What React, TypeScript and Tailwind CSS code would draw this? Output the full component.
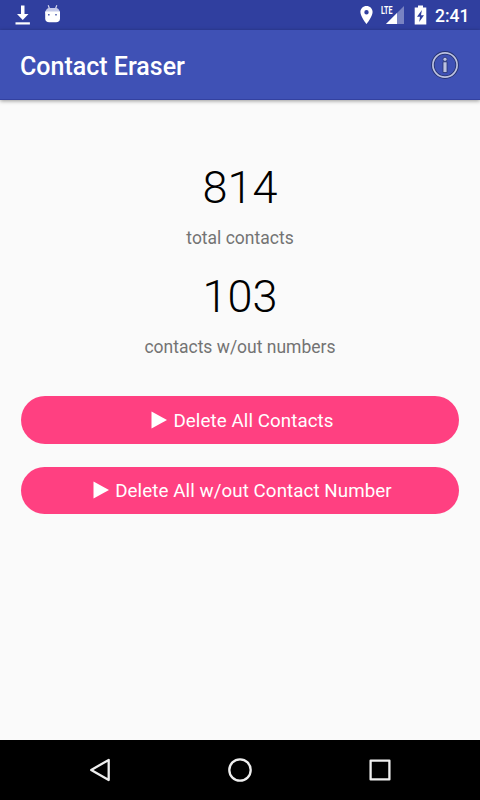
import type { ReactNode } from "react";

const stats = [
  { value: "814", label: "total contacts" },
  { value: "103", label: "contacts w/out numbers" },
];

const actions = ["Delete All Contacts", "Delete All w/out Contact Number"];

function StatusBar() {
  return (
    <div className="flex h-[30px] items-center justify-between bg-[#303f9f] pr-[10.5px] pl-[15px] text-white">
      <div className="flex items-center">
        {/* Download */}
        <svg width="15" height="30" viewBox="0 0 15 30" fill="currentColor">
          <path d="M6 5.5h3.5v8.5h4L7.75 20 2 14h4z" />
          <path d="M.5 22.3h14.4v2.2H.5z" />
        </svg>
        {/* Android head */}
        <svg width="16" height="30" viewBox="0 0 16 30" className="ml-[15px]">
          <path d="M3.2 5.2 4.6 9M11.8 5.2 10.4 9" stroke="#d5d8ec" strokeWidth="1.2" />
          <path d="M.2 13.5C.2 10 2 8 5 8h5.2c3 0 4.8 2 4.8 5.5z" fill="#c5cae9" />
          <path d="M.2 11.5h14.8v7c0 2.5-1.5 3.7-4 3.7H4.2c-2.5 0-4-1.2-4-3.7z" fill="#fff" />
          <path d="M3 14h1.6v1.6H3zM10.200 14h1.600v1.600h-1.600z" fill="#5361b0" />
        </svg>
      </div>
      <div className="flex items-center">
        {/* Location */}
        <svg width="13" height="30" viewBox="0 0 13 30" fill="currentColor">
          <path
            fillRule="evenodd"
            d="M6.5 6C3 6 .4 8.7.4 12.1c0 4.5 6.1 12 6.1 12s6.1-7.5 6.1-12C12.6 8.7 10 6 6.5 6m0 4a2.200 2.200 0 1 1 0 4.400 2.200 2.200 0 0 1 0-4.400"
          />
        </svg>
        {/* Mobile signal */}
        <div className="relative ml-2 h-[30px] w-6">
          <svg width="24" height="30" viewBox="0 0 24 30">
            <path d="M23 6v18H5z" fill="#7983c2" />
            <path d="M16 13v11H5z" fill="#fff" />
          </svg>
          <span className="absolute top-[5px] left-0 origin-left scale-x-[0.68] text-[10.5px] leading-[11px] font-bold">
            LTE
          </span>
        </div>
        {/* Battery */}
        <svg width="13" height="30" viewBox="0 0 13 30" className="ml-[9px]">
          <path d="M4 5.5h5v2h3.3V24.5H.7V7.5H4z" fill="#fff" />
          <path d="M7.9 10 3 16.8h3l-.8 5.2 4.8-6.800h-3z" fill="#303f9f" />
        </svg>
        <span className="ml-[8px] pt-px text-[17.5px] leading-[30px] font-medium">2:41</span>
      </div>
    </div>
  );
}

function AppBar() {
  return (
    <header className="flex h-[70px] items-center justify-between border-b border-[#3341a0] bg-[#3f51b5] pr-[21px] pl-5 shadow-[0_1px_4px_rgba(0,0,0,0.4)]">
      <h1 className="pt-[5px] text-[25px] leading-[30px] font-medium text-white">Contact Eraser</h1>
      <svg width="28" height="28" viewBox="0 0 28 28" fill="none">
        <circle cx="14" cy="14" r="12.2" stroke="#27336f" strokeWidth="3.4" />
        <circle cx="14" cy="14" r="12.1" stroke="#bcc2e2" strokeWidth="1.7" />
        <circle cx="14" cy="8.3" r="2.1" fill="#bcc2e2" stroke="#27336f" strokeWidth=".8" />
        <path d="M12 10.8h4v10.700h-4z" fill="#bcc2e2" stroke="#27336f" strokeWidth=".8" />
      </svg>
    </header>
  );
}

function NavIcon({ children }: { children: ReactNode }) {
  return (
    <svg width="28" height="28" viewBox="0 0 28 28" fill="none" stroke="#eee" strokeWidth="2.3" strokeLinejoin="round">
      {children}
    </svg>
  );
}

export default function App() {
  return (
    <div className="flex h-[800px] w-[480px] flex-col bg-[#fafafa] font-[Roboto,sans-serif]">
      <StatusBar />
      <AppBar />

      <main className="flex-1 px-[21px] pt-[61px] text-center">
        {stats.map((stat) => (
          <div key={stat.label} className="h-[109px]">
            <div className="text-[45px] leading-[53px] font-light text-black">{stat.value}</div>
            <div className="mt-[13px] text-[17.5px] leading-[22px] text-[#737373]">{stat.label}</div>
          </div>
        ))}

        <div className="mt-[17px] flex flex-col gap-[23px]">
          {actions.map((label) => (
            <button
              key={label}
              className="flex h-[47.5px] w-full items-center justify-center rounded-full bg-[#ff4081] pt-0.5 pl-[5px] text-[18.75px] leading-[22px] tracking-[0.075px] text-white"
            >
              <svg width="16" height="18" viewBox="0 0 16 18" className="mr-1.5 mb-0.5" fill="currentColor">
                <path d="M.5 .5 16 9 .5 17.5z" />
              </svg>
              {label}
            </button>
          ))}
        </div>
      </main>

      {/* Navigation */}
      <nav className="flex h-[60px] items-center justify-between bg-black px-[86px]">
        <NavIcon>
          <path d="M22.7 3.9v20.2L5.2 14z" />
        </NavIcon>
        <NavIcon>
          <circle cx="14" cy="14" r="10.7" />
        </NavIcon>
        <NavIcon>
          <path d="M4.6 4.6h18.8v18.8H4.6z" />
        </NavIcon>
      </nav>
    </div>
  );
}
